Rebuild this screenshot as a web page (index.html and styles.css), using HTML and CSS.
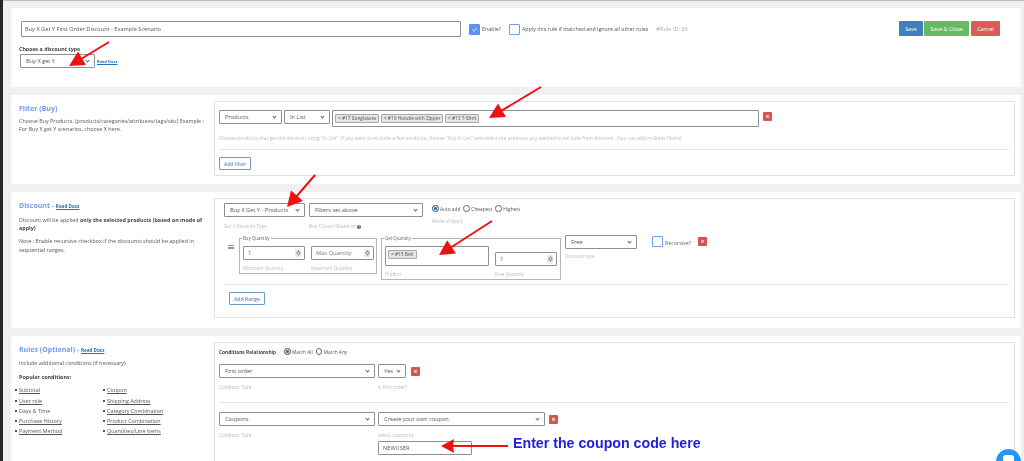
FILE: index.html
```html
<!DOCTYPE html>
<html lang="en">
<head>
<meta charset="utf-8">
<title>Buy X Get Y rule</title>
<link rel="stylesheet" href="styles.css">
</head>
<body>
<div class="page">
  <div class="topline"></div>

  <section class="card card-head">
    <div class="head-row">
      <input class="title-input" type="text" value="Buy X Get Y First Order Discount - Example Scenario">
      <span class="check on"><svg viewBox="0 0 12 12"><path d="M3 6.3 5.2 8.3 9 4" fill="none" stroke="#fff" stroke-width="1"/></svg></span>
      <span class="check-label">Enable?</span>
      <span class="check apply"></span>
      <span class="check-label">Apply this rule if matched and ignore all other rules</span>
      <span class="rule-id">#Rule ID: 29</span>
      <div class="btns">
        <span class="btn save">Save</span>
        <span class="btn close">Save &amp; Close</span>
        <span class="btn cancel">Cancel</span>
      </div>
    </div>
    <div class="type-label">Choose a discount type</div>
    <div class="type-row">
      <div class="sel type-sel">Buy X get Y<i class="chev"></i></div>
      <a class="docs small">Read Docs</a>
    </div>
  </section>

  <section class="card card-filter">
    <div class="side">
      <h2>Filter (Buy)</h2>
      <p>Choose Buy Products. (products/categories/attributes/tags/sku) Example : For Buy X get Y scenarios, choose X here.</p>
    </div>
    <div class="panel panel-filter">
      <div class="filter-row">
        <div class="sel w63">Products<i class="chev"></i></div>
        <div class="sel w46">In List<i class="chev"></i></div>
        <div class="multi w427">
          <span class="tag">× #17 Sunglasses</span>
          <span class="tag">× #19 Hoodie with Zipper</span>
          <span class="tag">× #13 T-Shirt</span>
        </div>
        <span class="del"><b>×</b></span>
      </div>
      <div class="help filter-help">Choose products that get the discount using "In List". If you want to exclude a few products, choose "Not In List" and select the products you wanted to exclude from discount. (You can add multiple filters)</div>
      <hr class="rule">
      <span class="btn-out add-filter">Add filter</span>
    </div>
  </section>

  <section class="card card-discount">
    <div class="side">
      <h2>Discount - <a class="docs">Read Docs</a></h2>
      <p class="para">Discount will be applied <b>only the selected products (based on mode of apply)</b></p>
      <p class="para">Note : Enable recursive checkbox if the discounts should be applied in sequential ranges.</p>
    </div>
    <div class="panel panel-discount">
      <div class="disc-top">
        <div class="field">
          <div class="sel w81">Buy X Get Y - Products<i class="chev"></i></div>
          <div class="help gap6">Get Y Discount Type</div>
        </div>
        <div class="field">
          <div class="sel w114">Filters set above<i class="chev"></i></div>
          <div class="help gap6">Buy X Count Based on <span class="info">?</span></div>
        </div>
        <div class="field mode">
          <div class="radios">
            <span class="radio on"></span><span>Auto add</span>
            <span class="radio"></span><span>Cheapest</span>
            <span class="radio"></span><span>Highest</span>
          </div>
          <div class="help mode-help">Mode of Apply</div>
        </div>
      </div>
      <div class="range">
        <span class="handle"></span>
        <fieldset class="fs fs-buy">
          <legend>Buy Quantity</legend>
          <div class="fs-row">
            <div class="field">
              <div class="num w62">1<span class="spin"></span></div>
              <div class="help gap5">Minimum Quantity</div>
            </div>
            <div class="field">
              <div class="num w63 ph">Max Quantity<span class="spin"></span></div>
              <div class="help gap5">Maximum Quantity</div>
            </div>
          </div>
        </fieldset>
        <fieldset class="fs fs-get">
          <legend>Get Quantity</legend>
          <div class="fs-row">
            <div class="field">
              <div class="multi w104 tall"><span class="tag">× #15 Belt</span></div>
              <div class="help gap5">Product</div>
            </div>
            <div class="field low">
              <div class="num w62">1<span class="spin"></span></div>
              <div class="help gap5">Free Quantity</div>
            </div>
          </div>
        </fieldset>
        <div class="field free">
          <div class="sel w72">Free<i class="chev"></i></div>
          <div class="help gap4">Discount type</div>
        </div>
        <span class="check recur"></span>
        <span class="check-label recur-label">Recursive?</span>
        <span class="del recur-del"><b>×</b></span>
      </div>
      <hr class="rule range-rule">
      <span class="btn-out add-range">Add Range</span>
    </div>
  </section>

  <section class="card card-rules">
    <div class="side">
      <h2>Rules (Optional) - <a class="docs">Read Docs</a></h2>
      <p class="para">Include additional conditions (if necessary)</p>
      <p class="para"><b>Popular conditions:</b></p>
      <div class="pop">
        <ul>
          <li><u>Subtotal</u></li>
          <li><u>User role</u></li>
          <li>Days &amp; Time</li>
          <li><u>Purchase History</u></li>
          <li><u>Payment Method</u></li>
        </ul>
        <ul>
          <li><u>Coupon</u></li>
          <li><u>Shipping Address</u></li>
          <li><u>Category Combination</u></li>
          <li><u>Product Combination</u></li>
          <li><u>Quantities/Line Items</u></li>
        </ul>
      </div>
    </div>
    <div class="panel panel-rules">
      <div class="rel-row">
        <b>Conditions Relationship</b>
        <span class="radios">
          <span class="radio on"></span><span>Match All</span>
          <span class="radio"></span><span>Match Any</span>
        </span>
      </div>
      <div class="cond">
        <div class="field">
          <div class="sel w156">First order<i class="chev"></i></div>
          <div class="help gap6">Condition Type</div>
        </div>
        <div class="field">
          <div class="sel w27">Yes<i class="chev"></i></div>
          <div class="help gap6">Is First order?</div>
        </div>
        <span class="del cond-del"><b>×</b></span>
      </div>
      <hr class="rule cond-rule">
      <div class="cond">
        <div class="field">
          <div class="sel w156">Coupons<i class="chev"></i></div>
          <div class="help gap6">Condition Type</div>
        </div>
        <div class="field">
          <div class="sel w167">Create your own coupon<i class="chev"></i></div>
          <div class="help gap6">select coupon by</div>
          <div class="coupon">NEWUSER</div>
        </div>
        <span class="del cond-del"><b>×</b></span>
      </div>
    </div>
  </section>
  <div class="edge"></div>
</div>

<svg class="arrows" width="1024" height="461" viewBox="0 0 1024 461" aria-hidden="true">
  <g stroke="#ee1111" stroke-width="2" fill="#ee1111">
    <path d="M109 42 81 59"/><path d="M69 66 86 65 82 58.3 78 51.5Z" stroke="none"/>
    <path d="M541 87 501 111"/><path d="M489 118 506 117 502 110.3 498 103.5Z" stroke="none"/>
    <path d="M315 175 296 197"/><path d="M287 207 303 201 297 195.7 291 190.4Z" stroke="none"/>
    <path d="M492 221 450 248"/><path d="M439 255 456 253.5 451.6 246.9 447.2 240.3Z" stroke="none"/>
    <path d="M508 446 452 446"/><path d="M441 446 454 439 453 446 454 453Z" stroke="none"/>
  </g>
</svg>
<div class="note">Enter the coupon code here</div>
<div class="chat"><span></span></div>
</body>
</html>
```

FILE: styles.css
```css
* { box-sizing: border-box; }
html, body { margin: 0; height: 461px; overflow: hidden; background: #f0f0f0; }
body { font-family: "Open Sans", "Noto Sans", sans-serif; font-size: 5px; color: #555; }

.page { height: 461px; overflow: hidden; padding-left: 11px; padding-right: 3px; filter: blur(0.4px); position: relative; }
.edge { position: absolute; left: 0; top: 0; bottom: 0; width: 3px; background: #23282d; }
.topline { height: 1px; margin: 0 -3px 7px -11px; background: #bdbdbd; }

.card { background: #fff; margin-bottom: 8px; }
.card-head { height: 79px; padding: 13px 21px 0 8px; }
.card-filter { height: 89px; padding: 6px 6px 0 8px; display: grid; grid-template-columns: 195px 801px; }
.card-discount { height: 136px; padding: 6px 6px 0 8px; display: grid; grid-template-columns: 195px 801px; margin-top: 1px; }
.card-rules { height: 140px; padding: 6px 6px 0 8px; display: grid; grid-template-columns: 195px 801px; }

.head-row { display: flex; align-items: center; height: 16px; }
.title-input { width: 440px; height: 16px; margin: 0 0 0 2px; padding: 0 3px; border: 1px solid #8c8f94; border-radius: 1px; font: 5.65px "Open Sans", sans-serif; color: #555; background: #fff; outline: 0; }
.check { width: 11px; height: 11px; flex: none; border: 1px solid #6f9eea; border-radius: 1px; background: #fff; }
.check svg { display: block; width: 100%; height: 100%; }
.check.on { margin-left: 8px; background: #5b93ec; border-color: #5b93ec; }
.check.apply { margin-left: 8px; }
.check-label { margin-left: 2px; font-size: 5.3px; white-space: nowrap; }
.rule-id { margin-left: 8px; color: #aaa; font-size: 5.6px; white-space: nowrap; }
.btns { margin-left: auto; margin-top: -1px; display: flex; gap: 1px; }
.btn { height: 15px; border-radius: 1px; color: #fff; font-size: 5.4px; display: flex; align-items: center; justify-content: center; opacity: .95; }
.save { width: 24px; background: #337ab7; }
.close { width: 45px; background: #5cb85c; }
.cancel { width: 29px; margin-left: 1px; background: #d9534f; }

.type-label { margin-top: 8px; height: 9px; line-height: 8px; font-weight: 700; font-size: 5.3px; color: #444; white-space: nowrap; }
.type-row { display: flex; align-items: flex-end; margin-left: 1px; }
.type-sel { width: 75px; height: 16px; }
.docs { color: #2271b1; text-decoration: underline; font-weight: 700; font-size: 4.6px; }
.docs.small { margin-left: 2px; font-size: 4px; padding-bottom: 4px; }

.sel { position: relative; display: flex; align-items: center; height: 14px; padding: 0 12px 0 5px; border: 1px solid #8c8f94; border-radius: 1px; background: #fff; font-size: 5.65px; white-space: nowrap; flex: none; }
.chev { position: absolute; right: 5px; top: 50%; width: 3px; height: 3px; margin-top: -2px; border-right: 1px solid #666; border-bottom: 1px solid #666; transform: rotate(45deg); }
.w27 { width: 28px; padding-left: 5px; } .w46 { width: 46px; } .w63 { width: 63px; } .w72 { width: 72px; }
.w81 { width: 81px; } .w114 { width: 114px; } .w156 { width: 156px; } .w167 { width: 167px; }

.side h2 { margin: 0; padding-top: 2.5px; height: 11px; line-height: 10px; font-size: 7px; font-weight: 700; color: #6d9eeb; white-space: nowrap; }
.side p { margin: 4.5px 0 0; font-size: 5.4px; line-height: 8.6px; width: 186px; }
.side b { color: #444; }
.side .para { margin-top: 5.5px; }
.card-discount .side .para { margin-top: 6.5px; }
.card-discount .side .para + .para { margin-top: 4.5px; }

.panel { border: 1px solid #e0e0e0; }
.panel-filter { height: 75px; padding: 8px 5px 0 4px; }
.filter-row { display: flex; align-items: flex-start; gap: 2px; }
.multi { display: flex; align-items: flex-start; gap: 1.5px; height: 17px; padding: 3px 2px; border: 1px solid #8c8f94; border-radius: 1px; background: #fff; flex: none; }
.w427 { width: 427px; } .w104 { width: 104px; } .tall { height: 20px; }
.tag { height: 8.5px; padding: 0 2px; background: #e4e4e4; border: 1px solid #aaa; border-radius: 1px; font-size: 4.8px; line-height: 6.5px; white-space: nowrap; }
.del { width: 9px; height: 9px; border-radius: 1px; background: #d9534f; color: #fff; display: flex; align-items: center; justify-content: center; flex: none; font-size: 7px; line-height: 9px; }
.del b { font-weight: 700; }
.filter-row .del { margin: 2px 0 0 2px; }
.help { color: #bbb; font-size: 4.6px; line-height: 7px; white-space: nowrap; }
.filter-help { margin-top: 8px; font-size: 4.9px; }
.rule { margin: 0; border: 0; border-top: 1px solid #e6e6e6; }
.filter-help + .rule { margin-top: 7px; }
.btn-out { display: inline-flex; align-items: center; justify-content: center; height: 13px; border: 1px solid #6b9ac4; border-radius: 1px; color: #3b7ab5; font-size: 5.2px; }
.add-filter { width: 32px; margin-top: 7px; }

.panel-discount { height: 120px; padding: 4px 5px 0 9px; }
.disc-top { display: flex; align-items: flex-start; gap: 4px; }
.field { display: flex; flex-direction: column; flex: none; }
.gap4 { margin-top: 4px; } .gap5 { margin-top: 5px; } .gap6 { margin-top: 6px; }
.mode { margin-left: 5px; margin-top: 1px; }
.radios { display: flex; align-items: center; height: 9px; font-size: 4.8px; white-space: nowrap; }
.radio { width: 6.5px; height: 6.5px; margin: 0 1.5px 0 3px; border: 1px solid #666; border-radius: 50%; flex: none; background: #fff; }
.radio:first-child { margin-left: 0; }
.radio.on { background: #2271b1; box-shadow: inset 0 0 0 1px #fff; }
.mode-help { margin-top: 5px; }
.info { display: inline-block; width: 4px; height: 4px; border-radius: 50%; background: #666; color: #fff; font-size: 3px; line-height: 4px; text-align: center; vertical-align: 0; }

.range { display: flex; align-items: flex-start; margin-top: 5px; height: 49px; }
.handle { width: 6px; height: 4px; margin: 10px 5px 0 4px; border-top: 1px solid #999; border-bottom: 1px solid #999; position: relative; flex: none; }
.handle::after { content: ""; display: block; height: 1px; margin-top: 0.5px; background: #999; }
.fs { margin: 0; padding: 4px 3px 2px; border: 1px solid #b5b5b5; min-width: 0; flex: none; }
.fs legend { margin-left: -1px; padding: 0 1px; height: 7px; line-height: 7px; font-size: 4.4px; color: #666; }
.fs-buy { width: 138px; height: 39px; }
.fs-get { width: 180px; height: 45px; margin-left: 4px; }
.fs-row { display: flex; gap: 6px; }
.num { position: relative; display: flex; align-items: center; height: 14px; padding-left: 4px; border: 1px solid #8c8f94; border-radius: 1px; font-size: 5.65px; background: #fff; }
.num.ph { color: #777; }
.w62 { width: 62px; } .w63.num { width: 63px; }
.spin { position: absolute; right: 3px; top: 2px; bottom: 2px; width: 6px; background: #e9e9e9; }
.spin::before, .spin::after { content: ""; position: absolute; left: 2px; width: 2px; height: 2px; border-left: 1px solid #888; border-top: 1px solid #888; }
.spin::before { top: 2px; transform: rotate(45deg); }
.spin::after { bottom: 2px; transform: rotate(225deg); }
.low { padding-top: 6px; }
.free { margin-left: 4px; }
.recur { margin: 1px 0 0 15px; }
.recur-label { margin: 4px 0 0 2px; color: #666; }
.recur-del { margin: 2px 0 0 7px; }
.range-rule { margin-left: -1px; }
.add-range { width: 36px; margin: 7px 0 0 5px; }

.pop { display: flex; margin-top: 4px; }
.pop ul { margin: 0; padding: 0; list-style: none; width: 88px; font-size: 5.4px; line-height: 10px; }
.pop li { position: relative; }
.pop li:first-child { margin-bottom: 1px; }
.pop li::before { content: ""; position: absolute; left: -4px; top: 4px; width: 1.5px; height: 1.5px; background: #555; }
.side u { color: #555; }

.panel-rules { height: 140px; padding: 4px 5px 0 4px; }
.rel-row { display: flex; align-items: center; gap: 8px; height: 9px; font-size: 4.8px; }
.rel-row b { color: #444; }
.cond { display: flex; align-items: flex-start; gap: 3px; margin-top: 8px; }
.cond-del { margin: 3px 0 0 1px; }
.cond-rule { margin-top: 11px; }
.cond-rule + .cond { margin-top: 9px; }
.coupon { width: 94px; height: 14px; margin-top: 2px; padding-left: 4px; display: flex; align-items: center; border: 1px solid #8c8f94; border-radius: 1px; font-size: 5.65px; background: #fff; }

.arrows { position: absolute; left: 0; top: 0; pointer-events: none; filter: blur(0.3px); }
.note { position: absolute; left: 513px; top: 435px; font: 700 14.2px/16px "Liberation Sans", Arial, sans-serif; color: #2222dd; white-space: nowrap; }
.chat { position: absolute; left: 996px; top: 449px; width: 25px; height: 25px; border-radius: 50%; background: #2196f3; }
.chat span { position: absolute; left: 7px; top: 6px; width: 11px; height: 11px; border-radius: 3px; background: #fff; }
```
